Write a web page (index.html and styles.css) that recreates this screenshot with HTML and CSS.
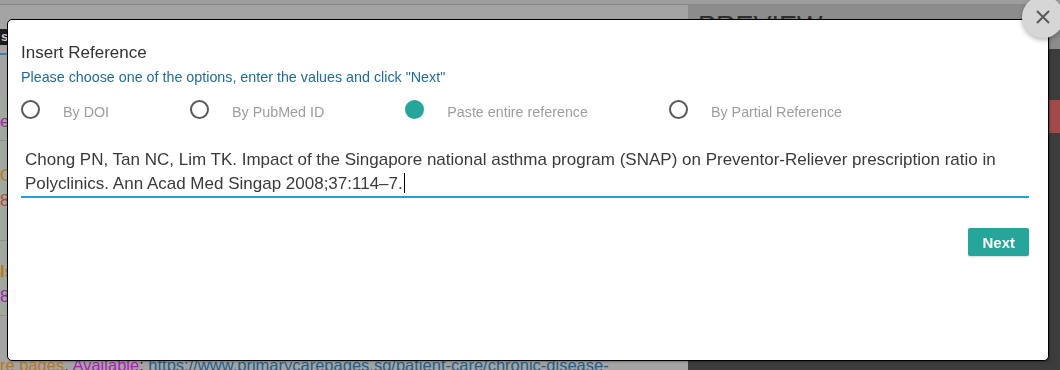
FILE: index.html
```html
<!DOCTYPE html>
<html lang="en">
<head>
    <meta charset="UTF-8">
    <meta name="viewport" content="width=device-width, initial-scale=1.0">
    <title>Insert Reference</title>
    <link rel="stylesheet" href="styles.css">
</head>
<body>
    <div class="app">
        <div class="topbar"></div>
        <div class="workspace">
            <div class="editor">
                <div class="editor-toolbar">
                    <span class="tab">s</span>
                </div>
                <div class="editor-body">
                    <div class="doc">
                        <div class="doc-cell">
                            <p class="line purple">es</p>
                        </div>
                        <div class="doc-cell">
                            <p class="line orange">C</p>
                            <p class="line red">8</p>
                        </div>
                        <div class="doc-cell">
                            <p class="line orange bold">ls</p>
                            <p class="line purple">8</p>
                        </div>
                    </div>
                    <div class="scrollbar"></div>
                </div>
                <p class="doc-footer">
                    <span class="orange">re pages</span>. <span class="magenta">Available</span>: <span class="link">https://www.primarycarepages.sg/patient-care/chronic-disease-</span>
                </p>
            </div>
            <div class="preview">
                <div class="preview-head">PREVIEW</div>
                <div class="preview-body">
                    <div class="preview-alert"></div>
                </div>
            </div>
        </div>
    </div>

    <div class="modal">
        <h2 class="modal-title">Insert Reference</h2>
        <p class="modal-hint">Please choose one of the options, enter the values and click "Next"</p>
        <div class="options">
            <label class="option"><span class="radio"></span><span class="option-label">By DOI</span></label>
            <label class="option"><span class="radio"></span><span class="option-label">By PubMed ID</span></label>
            <label class="option"><span class="radio checked"></span><span class="option-label">Paste entire reference</span></label>
            <label class="option"><span class="radio"></span><span class="option-label">By Partial Reference</span></label>
        </div>
        <div class="reference-input">Chong PN, Tan NC, Lim TK. Impact of the Singapore national asthma program (SNAP) on Preventor-Reliever prescription ratio in Polyclinics. Ann Acad Med Singap 2008;37:114–7.<span class="caret"></span></div>
        <div class="modal-actions">
            <button class="next-btn">Next</button>
        </div>
    </div>

    <button class="close-btn" aria-label="Close">
        <svg width="14" height="14" viewBox="0 0 14 14">
            <path d="M1 1 L13 13 M13 1 L1 13" stroke="#5a5a5a" stroke-width="2" fill="none"/>
        </svg>
    </button>
</body>
</html>
```

FILE: styles.css
```css
* {
    margin: 0;
    padding: 0;
    box-sizing: border-box;
}

html, body {
    height: 100%;
    width: 100%;
    overflow: hidden;
    font-family: "Liberation Sans", Arial, sans-serif;
    background-color: #3c3c3c;
}

/* page behind the dialog (already dimmed) */
.app {
    height: 100%;
    display: flex;
    flex-direction: column;
}

.topbar {
    height: 5px;
    background-color: #9e9e9e;
    border-bottom: 1px solid #888;
}

.workspace {
    flex: 1;
    display: flex;
    min-height: 0;
}

.editor {
    width: 688px;
    display: flex;
    flex-direction: column;
    background-color: #a4a4a4;
}

.editor-toolbar {
    height: 50px;
    padding-top: 22px;
    border-bottom: 2px solid #3d7fa5;
}

.tab {
    display: inline-block;
    height: 16px;
    padding: 0 1px;
    background-color: #1c1c1c;
    color: #c8c8c8;
    font-size: 13px;
    font-weight: bold;
    line-height: 16px;
}

.editor-body {
    flex: 1;
    display: flex;
    min-height: 0;
}

.doc {
    flex: 1;
    padding-top: 42px;
}

.doc-cell {
    background-color: #a3a89f;
    border-bottom: 1px solid #8e938b;
    padding: 12px 0;
}

.doc-cell:first-child {
    padding-top: 12px;
    height: 44px;
}

.doc-cell:nth-child(2) {
    height: 100px;
    padding-top: 22px;
}

.doc-cell:nth-child(3) {
    height: 75px;
    padding-top: 18px;
}

.line {
    font-size: 17px;
    line-height: 25px;
}

.scrollbar {
    width: 17px;
    background-color: #b0b0b0;
}

.doc-footer {
    height: 12px;
    font-size: 16.5px;
    line-height: 14px;
    color: #2a2a2a;
    white-space: nowrap;
    overflow: hidden;
}

.purple { color: #9a2aa8; }
.magenta { color: #b01cb8; }
.orange { color: #b8781c; }
.red { color: #b04a3a; }
.bold { font-weight: bold; }
.link { color: #1f5f8a; }

.preview {
    flex: 1;
    display: flex;
    flex-direction: column;
    background-color: #3c3c3c;
}

.preview-head {
    height: 44px;
    padding: 6px 0 0 10px;
    background-color: #8c8c8c;
    color: #2e2e2e;
    font-size: 27px;
    line-height: 30px;
}

.preview-body {
    flex: 1;
    padding-top: 51px;
}

.preview-alert {
    height: 33px;
    background-color: #a14a4a;
}

/* dialog */
.modal {
    position: fixed;
    left: 7px;
    top: 19px;
    width: 1042px;
    height: 342px;
    padding: 23px 19px 0 13px;
    background-color: #fff;
    border: 1px solid #000;
    border-radius: 5px;
    box-shadow: 1px 1px 2px rgba(0, 0, 0, 0.3);
}

.modal-title {
    font-size: 17px;
    font-weight: normal;
    line-height: 20px;
    color: #333;
}

.modal-hint {
    margin-top: 6px;
    font-size: 14.3px;
    line-height: 16px;
    color: #1f6c9c;
}

.options {
    display: flex;
    gap: 81px;
    margin-top: 15px;
}

.option {
    display: flex;
    align-items: flex-start;
    cursor: pointer;
}

.radio {
    width: 19px;
    height: 19px;
    margin-right: 23px;
    border: 2px solid #5a5a5a;
    border-radius: 50%;
}

.radio.checked {
    border-color: #26a69a;
    background-color: #26a69a;
}

.option-label {
    margin-top: 2px;
    font-size: 14.3px;
    line-height: 20px;
    color: #9e9e9e;
}

.reference-input {
    margin-top: 26px;
    padding: 0 4px;
    font-size: 17px;
    line-height: 24px;
    color: #3a3a3a;
    border-bottom: 2px solid #1e9fe4;
}

.caret {
    display: inline-block;
    width: 1px;
    height: 20px;
    margin-left: 1px;
    vertical-align: -4px;
    background-color: #000;
}

.modal-actions {
    display: flex;
    justify-content: flex-end;
    margin-top: 30px;
}

.next-btn {
    height: 28px;
    padding: 0 14px;
    border: none;
    border-radius: 2px;
    background-color: #26a69a;
    color: #fff;
    font-family: "Liberation Sans", Arial, sans-serif;
    font-size: 15px;
    font-weight: bold;
    box-shadow: 0 1px 2px rgba(0, 0, 0, 0.15);
    cursor: pointer;
}

.close-btn {
    position: fixed;
    left: 1022px;
    top: -4px;
    width: 42px;
    height: 42px;
    border: none;
    border-radius: 50%;
    background-color: #d6d6d6;
    box-shadow: 0 2px 5px rgba(0, 0, 0, 0.3);
    display: flex;
    align-items: center;
    justify-content: center;
    cursor: pointer;
}
```
